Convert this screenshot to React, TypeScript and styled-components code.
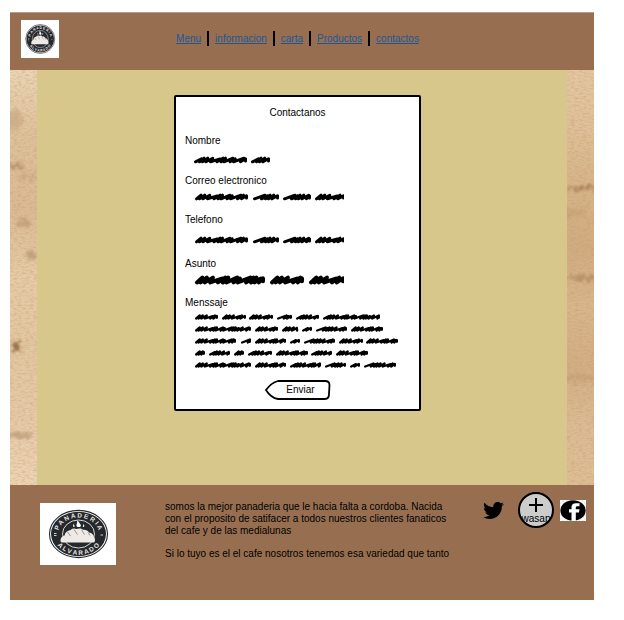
import React from "react";
import styled, { createGlobalStyle } from "styled-components";
import { FaTwitter } from "react-icons/fa";

const GlobalStyle = createGlobalStyle`
  * { box-sizing: border-box; }
  body {
    margin: 0;
    background: #fff;
    color: #000;
    font: 10px/12px "Liberation Sans", Arial, sans-serif;
  }
`;

const brown = "#976f50";

const Page = styled.div`
  margin: 12px 30px 20px 10px;
  border-top: 1px solid #b59a86;
`;

const Header = styled.header`
  display: grid;
  grid-template-columns: 1fr auto 1fr;
  align-items: center;
  padding: 7px 20px 12px 11px;
  background: ${brown};
`;

const LogoImage = styled.svg<{ $w: number; $h: number }>`
  display: block;
  flex: none;
  width: ${(p) => p.$w}px;
  height: ${(p) => p.$h}px;
  background: #fff;
`;

const Nav = styled.nav`
  display: flex;
  align-items: center;
  padding-bottom: 2px;
`;

const NavLink = styled.a`
  color: #1b5796;
  line-height: 15px;
  text-decoration: underline;

  & + & {
    margin-left: 6px;
    padding-left: 6px;
    border-left: 2px solid #000;
  }
`;

const Main = styled.main`
  display: grid;
  grid-template-columns: 27px 1fr 27px;
`;

const PaperArt = styled.svg`
  display: block;
  width: 100%;
  height: 0;
  min-height: 100%;
`;

const Panel = styled.div`
  display: flex;
  justify-content: center;
  padding: 25px 9px 74px 0;
  background: #d8c78b;
`;

const Card = styled.form`
  display: flex;
  flex-direction: column;
  width: 100%;
  max-width: 247px;
  padding: 10px 9px 9px;
  background: #fff;
  border: 2px solid #000;
  border-radius: 2px;
`;

const Title = styled.h1`
  margin: 0 0 16px;
  font: inherit;
  text-align: center;
`;

const Field = styled.div<{ $before: number; $after: number }>`
  display: grid;
  row-gap: ${(p) => p.$before}px;
  margin-bottom: ${(p) => p.$after}px;
`;

const Control = styled.div`
  display: grid;
  padding-left: 8px;

  > * { grid-area: 1 / 1; }
`;

const ScribbleArt = styled.svg`
  display: block;
  pointer-events: none;
`;

const Input = styled.input`
  width: 100%;
  height: 12px;
  padding: 0;
  border: 0;
  background: transparent;
  font: inherit;
`;

const TextArea = styled.textarea`
  width: 100%;
  padding: 0;
  border: 0;
  background: transparent;
  font: inherit;
  resize: none;
`;

const SendButton = styled.button`
  display: grid;
  align-self: center;
  place-items: center;
  padding: 0;
  border: 0;
  background: none;
  color: inherit;
  font: inherit;
  cursor: pointer;

  > * { grid-area: 1 / 1; }
`;

const SendLabel = styled.span`
  padding-left: 6px;
`;

const Footer = styled.footer`
  display: flex;
  align-items: flex-start;
  padding: 7px 8px 35px 30px;
  background: ${brown};
`;

const FooterLogo = styled.div`
  padding-top: 11px;
`;

const About = styled.div`
  flex: 1;
  max-width: 334px;
  padding: 9px 0 0 49px;
`;

const Paragraph = styled.p`
  margin: 0 0 11px;
  &:last-child { margin: 0; }
`;

const Social = styled.div`
  display: flex;
  align-items: center;
  margin-left: auto;
`;

const SocialLink = styled.a<{ $gap: number }>`
  display: block;
  margin-left: ${(p) => p.$gap}px;
  color: #000;
  text-decoration: none;

  svg { display: block; }
`;

const Whatsapp = styled(SocialLink)`
  display: flex;
  flex-direction: column;
  align-items: center;
  width: 36px;
  height: 36px;
  padding-top: 3px;
  border: 2px solid #000;
  border-radius: 50%;
  background: #ccc;
`;

const FacebookTile = styled(SocialLink)`
  background: repeating-conic-gradient(#eee 0 25%, #fff 0 50%) 0 0 / 4px 4px;
`;

function Logo({ w, h, id }: { w: number; h: number; id: string }) {
  return (
    <LogoImage $w={w} $h={h} viewBox="0 0 76 62" preserveAspectRatio="none" role="img" aria-label="Panaderia Alvarado">
      <ellipse cx="38.5" cy="31" rx="29" ry="23.6" fill="#fff" stroke="#25292d" strokeWidth="1.1" />
      <ellipse cx="38.5" cy="31" rx="27.5" ry="22.2" fill="#25292d" />
      <ellipse cx="38.5" cy="31" rx="16" ry="14" fill="none" stroke="#e9e5e1" strokeWidth="0.9" />
      <defs>
        <path id={`${id}-top`} d="M18 31 A20.5 16.4 0 0 1 59 31" />
        <path id={`${id}-bottom`} d="M13.5 31 A25 20.8 0 0 0 63.5 31" />
      </defs>
      <g fill="#e9e5e1" fontFamily="Liberation Sans, sans-serif" fontSize="6.4" fontWeight="bold" textAnchor="middle">
        <text><textPath href={`#${id}-top`} startOffset="50%">P A N A D E R I A</textPath></text>
        <text><textPath href={`#${id}-bottom`} startOffset="50%">A L V A R A D O</textPath></text>
      </g>
      <path d="M14 30.5h2.5M14 32.5h2.5M60.5 32h2.5" stroke="#e9e5e1" strokeWidth="0.9" />
      <path d="M37.5 24c-2.5-2 .4-3.5-.4-6.5 2.6 1.2 2 2.6 3.2 3.8 1 1 .6 2-.2 2.7z" fill="#fff" />
      <path d="M33.5 24c-1-1.2-.4-2 0-3 1 1 1.4 2 1 3zM43 24c-.6-1.2 .4-2 .4-3 1.2 1 1.2 2 .6 3z" fill="#e9e5e1" />
      <path d="M20.5 37.5c0-2.5 1.5-4.3 4-5 .6-3.5 3-5 6-5.6 2-1.6 4-1.8 6-.9 2.5-.9 5-.6 6.5 .8 3-.2 5 .8 6 2.8 3 .5 4.5 2.3 5 4.4 .8 1 1.2 2.4 .9 4 0 1-1 1.6-2 1.6H22.5c-1.3 0-2-.7-2-2.1z" fill="#eee9e4" />
      <path d="M27.5 29l3 4M34 26.5l3.5 5M41.5 26.8l3 4.7M48 29.5l2 3" stroke="#5a5a5a" strokeWidth="0.6" fill="none" />
    </LogoImage>
  );
}

type Word = [number, number];

/* One word of a scrawled line: slanted teeth of uneven width. */
function wordPath([from, to]: Word, y: number, amp: number, pitch: number, weight: number) {
  const rhythm = [1.4, 0.8, 0.6, 0.7, 0.9, 1.3, 0.8, 0.6, 1.2, 0.7];
  const end = to - weight / 2;
  let x = from + weight / 2;
  let i = from % 3;
  let d = `M${x} ${y + amp}`;
  while (x < end - pitch * 1.2) {
    const step = pitch * rhythm[i % rhythm.length];
    const lift = i % 4 === 1 ? 0.6 : 1;
    d += `L${Math.min(end, x + step * 1.5)} ${y - amp * lift}L${x + step} ${y + amp}`;
    x += step;
    i += 1;
  }
  return `${d}L${end} ${y - amp * 0.7}L${end} ${y + amp * 0.5}`;
}

function Scribble({ rows, amp, pitch, weight, width = 210 }: {
  rows: Word[][]; amp: number; pitch: number; weight: number; width?: number;
}) {
  return (
    <ScribbleArt width={width} height={rows.length * 12} aria-hidden="true">
      <g fill="none" stroke="#000" strokeWidth={weight} strokeLinecap="round" strokeLinejoin="round">
        {rows.map((words, r) =>
          words.map((word) => (
            <path key={`${r}-${word[0]}`} d={wordPath(word, r * 12 + 6, amp, pitch, weight)} />
          ))
        )}
      </g>
    </ScribbleArt>
  );
}

const contactLine: Word[] = [[2, 55], [60, 86], [90, 118], [122, 152]];

const fields = [
  { id: "nombre", label: "Nombre", type: "text", before: 7, after: 9, words: [[1, 54], [58, 77]] as Word[], amp: 1.8, pitch: 5, weight: 3 },
  { id: "correo", label: "Correo electronico", type: "email", before: 4, after: 11, words: contactLine, amp: 1.8, pitch: 5, weight: 3 },
  { id: "telefono", label: "Telefono", type: "tel", before: 8, after: 12, words: contactLine, amp: 1.8, pitch: 5, weight: 3 },
  { id: "asunto", label: "Asunto", type: "text", before: 4, after: 11, words: [[2, 72], [77, 111], [116, 152]] as Word[], amp: 2.4, pitch: 6, weight: 4 },
];

const messageRows: Word[][] = [
  [[2, 25], [29, 53], [56, 80], [84, 99], [103, 126], [130, 187]],
  [[2, 58], [62, 85], [89, 105], [109, 119], [123, 154], [158, 190]],
  [[2, 43], [48, 58], [62, 93], [97, 107], [111, 142], [146, 170], [173, 205]],
  [[2, 12], [16, 37], [41, 51], [55, 79], [83, 115], [118, 139], [143, 175]],
  [[2, 58], [62, 93], [97, 128], [132, 153], [157, 167], [171, 203]],
];

interface Blot { x: number; y: number; rx: number; ry: number; o: number }

function Paper({ id, seed, stops, blots }: { id: string; seed: number; stops: string[]; blots: Blot[] }) {
  return (
    <PaperArt viewBox="0 0 27 415" preserveAspectRatio="none" aria-hidden="true">
      <defs>
        <linearGradient id={`${id}-tone`} x1="0" y1="0" x2="0" y2="1">
          {stops.map((color, i) => <stop key={i} offset={i / (stops.length - 1)} stopColor={color} />)}
        </linearGradient>
        <filter id={`${id}-grain`} x="0" y="0" width="100%" height="100%">
          <feTurbulence type="fractalNoise" baseFrequency="0.25 0.6" numOctaves="3" seed={seed} />
          <feColorMatrix values="0 0 0 0 0.5  0 0 0 0 0.31  0 0 0 0 0.16  0.9 0 0 0 -0.36" />
        </filter>
        <filter id={`${id}-soft`} x="-50%" y="-50%" width="200%" height="200%">
          <feTurbulence type="fractalNoise" baseFrequency="0.3" numOctaves="3" seed={seed} result="n" />
          <feDisplacementMap in="SourceGraphic" in2="n" scale="14" xChannelSelector="R" yChannelSelector="G" />
          <feGaussianBlur stdDeviation="0.8" />
        </filter>
      </defs>
      <rect width="27" height="415" fill={`url(#${id}-tone)`} />
      <g fill="#8a5f38" filter={`url(#${id}-soft)`}>
        {blots.map((b) => <ellipse key={b.y} cx={b.x} cy={b.y} rx={b.rx} ry={b.ry} opacity={b.o} />)}
      </g>
      <rect width="27" height="415" filter={`url(#${id}-grain)`} />
    </PaperArt>
  );
}

const leftBlots: Blot[] = [
  { x: 5, y: 50, rx: 9, ry: 10, o: 0.2 },
  { x: 6, y: 96, rx: 7, ry: 3, o: 0.5 },
  { x: 18, y: 107, rx: 10, ry: 3, o: 0.2 },
  { x: 14, y: 153, rx: 7, ry: 5, o: 0.28 },
  { x: 22, y: 185, rx: 6, ry: 5, o: 0.35 },
  { x: 6, y: 276, rx: 4, ry: 5, o: 0.8 },
  { x: 8, y: 365, rx: 18, ry: 3, o: 0.35 },
];

const rightBlots: Blot[] = [
  { x: 16, y: 118, rx: 15, ry: 2, o: 0.6 },
  { x: 6, y: 143, rx: 14, ry: 5, o: 0.12 },
  { x: 17, y: 208, rx: 16, ry: 3, o: 0.4 },
  { x: 12, y: 308, rx: 16, ry: 4, o: 0.16 },
];

export default function App() {
  return (
    <>
      <GlobalStyle />
      <Page>
        <Header>
          <Logo w={38} h={38} id="brand" />
          <Nav aria-label="Principal">
            {["Menu", "informacion", "carta", "Productos", "contactos"].map((name) => (
              <NavLink key={name} href={`#${name.toLowerCase()}`}>{name}</NavLink>
            ))}
          </Nav>
        </Header>

        <Main>
          <Paper id="left" seed={4} stops={["#ebd5b5", "#dec19a", "#dbbb93", "#e6cca7", "#e3c7a0", "#e6caa8", "#edd5b4"]} blots={leftBlots} />
          <Panel>
            <Card onSubmit={(e) => e.preventDefault()}>
              <Title>Contactanos</Title>
              {fields.map((f) => (
                <Field key={f.id} $before={f.before} $after={f.after}>
                  <label htmlFor={f.id}>{f.label}</label>
                  <Control>
                    <Input id={f.id} type={f.type} />
                    <Scribble rows={[f.words]} amp={f.amp} pitch={f.pitch} weight={f.weight} width={151} />
                  </Control>
                </Field>
              ))}
              <Field $before={2} $after={9}>
                <label htmlFor="mensaje">Menssaje</label>
                <Control>
                  <TextArea id="mensaje" rows={5} />
                  <Scribble rows={messageRows} amp={1.5} pitch={4} weight={2.3} />
                </Control>
              </Field>
              <SendButton type="submit">
                <svg width="66" height="20" viewBox="0 0 66 20" fill="#fff" stroke="#000" strokeWidth="1.8" aria-hidden="true">
                  <path d="M13 1H60Q64.5 1 64.5 5L64 14Q64 19 60 19H13Q6 18 1 10Q6 3 13 1Z" />
                </svg>
                <SendLabel>Enviar</SendLabel>
              </SendButton>
            </Card>
          </Panel>
          <Paper id="right" seed={11} stops={["#e4c8a2", "#dfc098", "#d7b388", "#d1ac81", "#dab68d", "#d3ae84", "#dcbc94", "#debe95"]} blots={rightBlots} />
        </Main>

        <Footer>
          <FooterLogo>
            <Logo w={76} h={62} id="footer-brand" />
          </FooterLogo>
          <About>
            <Paragraph>
              somos la mejor panaderia que le hacia falta a cordoba. Nacida con el proposito de satifacer a todos
              nuestros clientes fanaticos del cafe y de las medialunas
            </Paragraph>
            <Paragraph>Si lo tuyo es el el cafe nosotros tenemos esa variedad que tanto</Paragraph>
          </About>
          <Social>
            <SocialLink href="#twitter" aria-label="Twitter" $gap={0}>
              <FaTwitter size={21} />
            </SocialLink>
            <Whatsapp href="#wasap" $gap={14}>
              <svg width="16" height="16" viewBox="0 0 16 16" stroke="#000" strokeWidth="2" aria-hidden="true">
                <path d="M1 8H15M8 1V15" />
              </svg>
              <span>wasap</span>
            </Whatsapp>
            <FacebookTile href="#facebook" aria-label="Facebook" $gap={6}>
              <svg width="26" height="21" viewBox="0 0 26 21" aria-hidden="true">
                <ellipse cx="13" cy="10.5" rx="12.6" ry="10.3" />
                <path d="M11.5 21V12.5H9V9.2H11.5V7Q11.5 3.2 16 3.2H19.5V6.3H17.3Q15.8 6.3 15.8 7.6V9.2H19.5L19 12.5H15.800V21Z" fill="#fff" />
              </svg>
            </FacebookTile>
          </Social>
        </Footer>
      </Page>
    </>
  );
}
